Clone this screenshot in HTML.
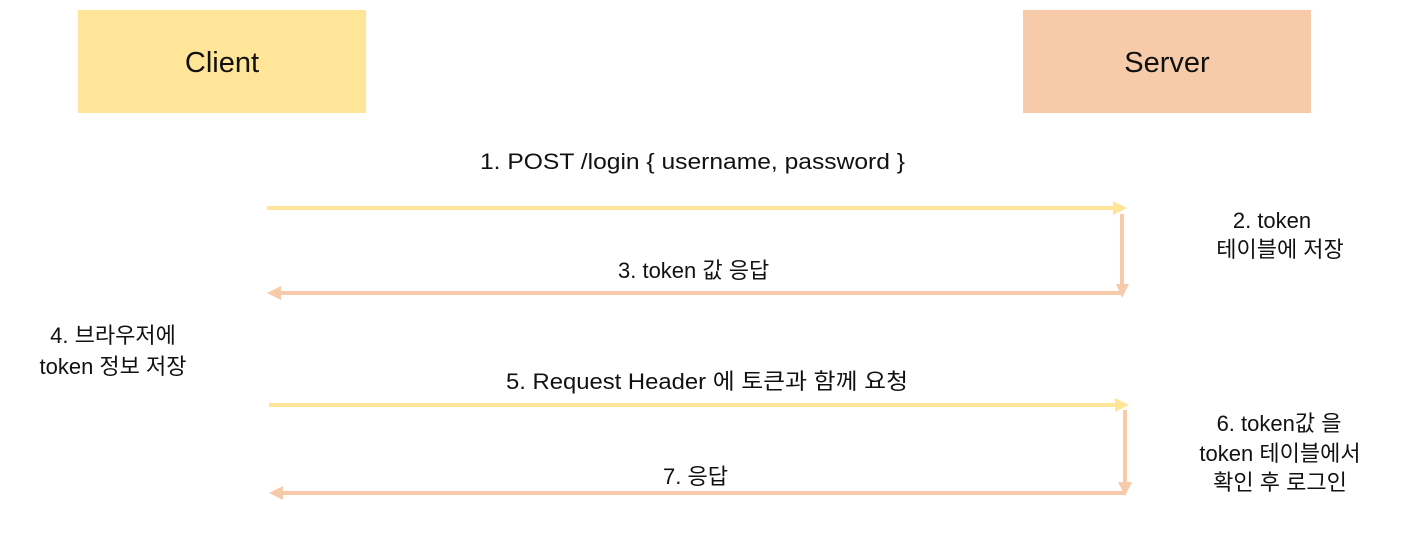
<!DOCTYPE html>
<html><head><meta charset="utf-8"><style>
html,body{margin:0;padding:0;background:#fff;}
svg text{font-family:"Liberation Sans","Noto Sans CJK KR",sans-serif;fill:#111;}
</style></head><body>
<svg width="1411" height="538" viewBox="0 0 1411 538" xmlns="http://www.w3.org/2000/svg">
<rect x="78" y="10" width="288" height="103" fill="#fee597"/>
<rect x="1023" y="10" width="288" height="103" fill="#f7cba9"/>
<text x="222" y="72" font-size="29" text-anchor="middle">Client</text>
<text x="1167" y="72" font-size="29" text-anchor="middle">Server</text>

<g stroke-width="4" fill="none">
<line x1="267" y1="208" x2="1114" y2="208" stroke="#fee597"/>
<line x1="1122" y1="214" x2="1122" y2="286" stroke="#f7cba9"/>
<line x1="1122" y1="293" x2="280" y2="293" stroke="#f7cba9"/>
<line x1="269" y1="405" x2="1116" y2="405" stroke="#fee597"/>
<line x1="1125" y1="410" x2="1125" y2="484" stroke="#f7cba9"/>
<line x1="1125" y1="493" x2="282" y2="493" stroke="#f7cba9"/>
</g>
<polygon points="1113,201 1127,208 1113,215" fill="#fee597"/>
<polygon points="1116,284 1122,298 1129,284" fill="#f7cba9"/>
<polygon points="281,286 267,293 281,300" fill="#f7cba9"/>
<polygon points="1115,398 1129,405 1115,412" fill="#fee597"/>
<polygon points="1118,482 1125,496 1132,482" fill="#f7cba9"/>
<polygon points="283,486 269,493 283,500" fill="#f7cba9"/>

<g font-size="22">
<text x="480" y="169" textLength="425" lengthAdjust="spacingAndGlyphs">1. POST /login { username, password }</text>
<text x="1272" y="228" text-anchor="middle">2. token</text>
<text x="1280" y="257" text-anchor="middle">테이블에 저장</text>
<text x="618" y="278">3. token 값 응답</text>
<text x="113" y="343" text-anchor="middle">4. 브라우저에</text>
<text x="113" y="374" text-anchor="middle">token 정보 저장</text>
<text x="506" y="389" textLength="402" lengthAdjust="spacingAndGlyphs">5. Request Header 에 토큰과 함께 요청</text>
<text x="1279" y="431" text-anchor="middle">6. token값 을</text>
<text x="1280" y="461" text-anchor="middle">token 테이블에서</text>
<text x="1280" y="490" text-anchor="middle">확인 후 로그인</text>
<text x="663" y="484">7. 응답</text>
</g>
</svg>
</body></html>
